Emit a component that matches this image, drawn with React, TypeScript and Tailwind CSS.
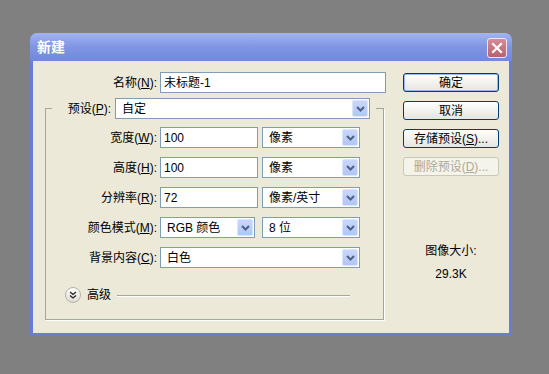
import React from "react";

const FONT = { fontFamily: '"Liberation Sans", "Noto Sans CJK SC", sans-serif' };

function Chevron() {
  return (
    <svg width="9" height="6" viewBox="0 0 9 6">
      <path d="M1 1 L4.5 4.5 L8 1" fill="none" stroke="#4d6185" strokeWidth="2" />
    </svg>
  );
}

function Select({ value, w }: { value: string; w: string }) {
  return (
    <div className={`${w} h-[21px] bg-white border border-[#7f9db9] flex items-center justify-between pl-[6px] pr-[1px]`}>
      <span className="text-[12px] text-black leading-none">{value}</span>
      <div className="w-[16px] h-[17px] rounded-[2px] border border-[#dbe5fc] bg-gradient-to-b from-[#c8d7fb] to-[#b2c6f5] flex items-center justify-center">
        <Chevron />
      </div>
    </div>
  );
}

function Input({ value, w }: { value: string; w: string }) {
  return (
    <div className={`${w} h-[21px] bg-white border border-[#7f9db9] flex items-center pl-[3px]`}>
      <span className="text-[12px] text-black leading-none">{value}</span>
    </div>
  );
}

function Label({ text, k, rest, w }: { text: string; k: string; rest: string; w: string }) {
  return (
    <div className={`${w} text-right text-[12px] text-black leading-none`}>
      {text}(<span className="underline">{k}</span>){rest}
    </div>
  );
}

function Button({ children, def, disabled }: { children: React.ReactNode; def?: boolean; disabled?: boolean }) {
  if (disabled) {
    return (
      <div className="w-[96px] h-[19px] rounded-[3px] border border-[#c9c7ba] bg-[#f5f4ea] flex items-center justify-center text-[12px] text-[#aca899] leading-none">
        {children}
      </div>
    );
  }
  return (
    <div
      className={`w-[96px] h-[19px] rounded-[3px] border border-[#003c74] bg-gradient-to-b from-white to-[#e6e5de] flex items-center justify-center text-[12px] text-black leading-none ${
        def ? "shadow-[inset_0_0_0_1px_#9fb5ef]" : ""
      }`}
    >
      {children}
    </div>
  );
}

export default function App() {
  return (
    <div className="w-[549px] h-[374px] bg-[#808080] pt-[33px] pl-[30px]" style={FONT}>
      <div className="w-[482px] h-[303px] rounded-t-[7px] bg-[#6a7bd8] flex flex-col px-[3px] pb-[3px]">
        {/* title bar */}
        <div className="h-[28px] -mx-[3px] rounded-t-[7px] bg-gradient-to-b from-[#a3b4f0] via-[#7f95e2] to-[#7189dc] flex items-start justify-between">
          <div className="pl-[7px] pt-[7px] text-[14px] font-bold text-white leading-[14px]">新建</div>
          <div className="mt-[5px] mr-[5px] w-[20px] h-[20px] rounded-[3px] border border-[#f0e6f0] bg-gradient-to-b from-[#d88b97] to-[#b9606f] flex items-center justify-center">
            <svg width="12" height="12" viewBox="0 0 12 12">
              <path d="M2 2 L10 10 M10 2 L2 10" stroke="white" strokeWidth="2.2" strokeLinecap="square" />
            </svg>
          </div>
        </div>
        {/* client */}
        <div className="flex-1 bg-[#ece9d8] flex">
          {/* left */}
          <div className="w-[341px] ml-[12px]">
            <div className="mt-[11px] h-[21px] flex items-center">
              <Label text="名称" k="N" rest=":" w="w-[112px]" />
              <div className="ml-[3px]">
                <Input value="未标题-1" w="w-[226px]" />
              </div>
            </div>
            <fieldset className="mt-[5px] w-[339px] border border-[#a7a69b] shadow-[1px_1px_0_#fff] px-0 pb-[16px]">
              <legend className="ml-[6px] p-0">
                <div className="w-[324px] h-[21px] flex items-center bg-[#ece9d8]">
                  <div className="flex-1 text-right pr-[4px] text-[12px] leading-none text-black">
                    预设(<span className="underline">P</span>):
                  </div>
                  <Select value="自定" w="w-[255px]" />
                  <div className="w-[6px]" />
                </div>
              </legend>
              <div className="pt-[8px] flex flex-col gap-[9px]">
                <div className="h-[21px] flex items-center">
                  <Label text="宽度" k="W" rest=":" w="w-[111px]" />
                  <div className="ml-[3px] flex gap-[4px]">
                    <Input value="100" w="w-[98px]" />
                    <Select value="像素" w="w-[98px]" />
                  </div>
                </div>
                <div className="h-[21px] flex items-center">
                  <Label text="高度" k="H" rest=":" w="w-[111px]" />
                  <div className="ml-[3px] flex gap-[4px]">
                    <Input value="100" w="w-[98px]" />
                    <Select value="像素" w="w-[98px]" />
                  </div>
                </div>
                <div className="h-[21px] flex items-center">
                  <Label text="分辨率" k="R" rest=":" w="w-[111px]" />
                  <div className="ml-[3px] flex gap-[4px]">
                    <Input value="72" w="w-[98px]" />
                    <Select value="像素/英寸" w="w-[98px]" />
                  </div>
                </div>
                <div className="h-[21px] flex items-center">
                  <Label text="颜色模式" k="M" rest=":" w="w-[111px]" />
                  <div className="ml-[3px] flex gap-[7px]">
                    <Select value="RGB 颜色" w="w-[95px]" />
                    <Select value="8 位" w="w-[98px]" />
                  </div>
                </div>
                <div className="h-[21px] flex items-center">
                  <Label text="背景内容" k="C" rest=":" w="w-[111px]" />
                  <div className="ml-[3px]">
                    <Select value="白色" w="w-[200px]" />
                  </div>
                </div>
              </div>
              <div className="mt-[19px] h-[16px] flex items-center">
                <div className="ml-[19px] w-[16px] h-[16px] rounded-full border border-[#b5b3a6] bg-gradient-to-b from-white to-[#dedcd2] flex items-center justify-center">
                  <svg width="8" height="8" viewBox="0 0 8 8">
                    <path d="M1 1 L4 3.5 L7 1 M1 4.5 L4 7 L7 4.5" fill="none" stroke="#222" strokeWidth="1.3" />
                  </svg>
                </div>
                <div className="ml-[6px] text-[12px] leading-none text-black">高级</div>
                <div className="ml-[6px] w-[233px] h-0 border-t border-[#a7a69b] shadow-[0_1px_0_#fff]" />
              </div>
            </fieldset>
          </div>
          {/* right */}
          <div className="ml-[17px] mt-[12px] flex flex-col items-center">
            <div className="flex flex-col gap-[9px]">
              <Button def>确定</Button>
              <Button>取消</Button>
              <Button>
                存储预设(<span className="underline">S</span>)...
              </Button>
              <Button disabled>
                删除预设(<span className="underline">D</span>)...
              </Button>
            </div>
            <div className="mt-[68px] text-[12px] leading-[14px] text-black">图像大小:</div>
            <div className="mt-[9px] text-[12px] leading-[14px] text-black">29.3K</div>
          </div>
        </div>
      </div>
    </div>
  );
}
